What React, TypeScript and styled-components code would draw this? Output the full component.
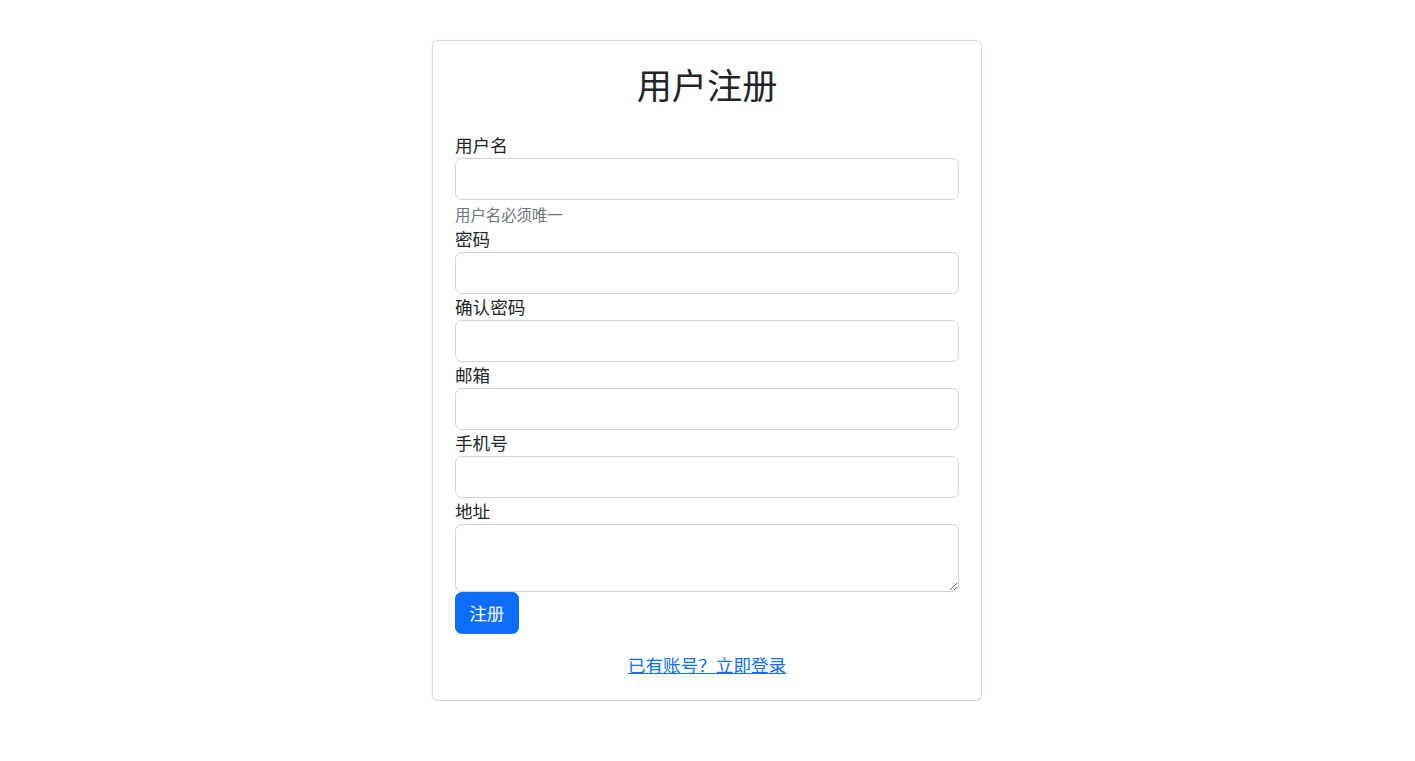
import React from "react";
import styled, { createGlobalStyle } from "styled-components";

const GlobalStyle = createGlobalStyle`
  *, *::before, *::after {
    box-sizing: border-box;
  }
  body {
    margin: 0;
    background: #fff;
    color: #212529;
    font-family: "Noto Sans CJK SC", "Noto Sans", sans-serif;
    font-size: 17.6px;
    line-height: 1.5;
  }
`;

const Page = styled.div`
  display: flex;
  justify-content: center;
  padding: 40px 1px 0 0;
`;

const Card = styled.form`
  width: 550px;
  padding: 22px;
  border: 1px solid rgba(0, 0, 0, 0.15);
  border-radius: 6.6px;
  background: #fff;
  box-shadow: 0 2px 5px rgba(0, 0, 0, 0.08);
`;

const Title = styled.h2`
  margin: 0 0 27px;
  text-align: center;
  font-size: 35.2px;
  font-weight: 400;
  line-height: 1.2;
`;

const Field = styled.div`
  display: flex;
  flex-direction: column;
`;

const Label = styled.label`
  display: block;
  font-size: 17.6px;
  line-height: 26px;
`;

const controlStyles = `
  display: block;
  width: 100%;
  padding: 6.6px 13.2px;
  font: inherit;
  font-size: 17.6px;
  line-height: 1.5;
  color: #212529;
  background: #fff;
  border: 1px solid #ced4da;
  border-radius: 6.6px;
  outline: none;
`;

const Input = styled.input`
  ${controlStyles}
  height: 42px;
`;

const TextArea = styled.textarea`
  ${controlStyles}
  height: 68px;
  resize: vertical;
`;

const Hint = styled.div`
  margin-top: 3px;
  font-size: 15.4px;
  line-height: 23px;
  color: #6c757d;
`;

const SubmitButton = styled.button`
  display: inline-block;
  align-self: flex-start;
  height: 42px;
  padding: 0 13.2px;
  font: inherit;
  font-size: 17.6px;
  color: #fff;
  background: #0d6efd;
  border: 1px solid #0d6efd;
  border-radius: 6.6px;
  cursor: pointer;
`;

const Footer = styled.p`
  margin: 17.6px 0 0;
  text-align: center;
  line-height: 26px;
`;

const LoginLink = styled.a`
  color: #0d6efd;
  text-decoration: underline;
`;

const fields = [
  { id: "password", label: "密码", type: "password" },
  { id: "confirm", label: "确认密码", type: "password" },
  { id: "email", label: "邮箱", type: "email" },
  { id: "phone", label: "手机号", type: "tel" },
];

const App: React.FC = () => {
  return (
    <>
      <GlobalStyle />
      <Page>
        <Card onSubmit={(e) => e.preventDefault()}>
          <Title>用户注册</Title>
          <Field>
            <Label htmlFor="username">用户名</Label>
            <Input id="username" type="text" />
            <Hint>用户名必须唯一</Hint>
          </Field>
          {fields.map((f) => (
            <Field key={f.id}>
              <Label htmlFor={f.id}>{f.label}</Label>
              <Input id={f.id} type={f.type} />
            </Field>
          ))}
          <Field>
            <Label htmlFor="address">地址</Label>
            <TextArea id="address" rows={2} />
          </Field>
          <SubmitButton type="submit">注册</SubmitButton>
          <Footer>
            <LoginLink href="#">已有账号？立即登录</LoginLink>
          </Footer>
        </Card>
      </Page>
    </>
  );
};

export default App;
